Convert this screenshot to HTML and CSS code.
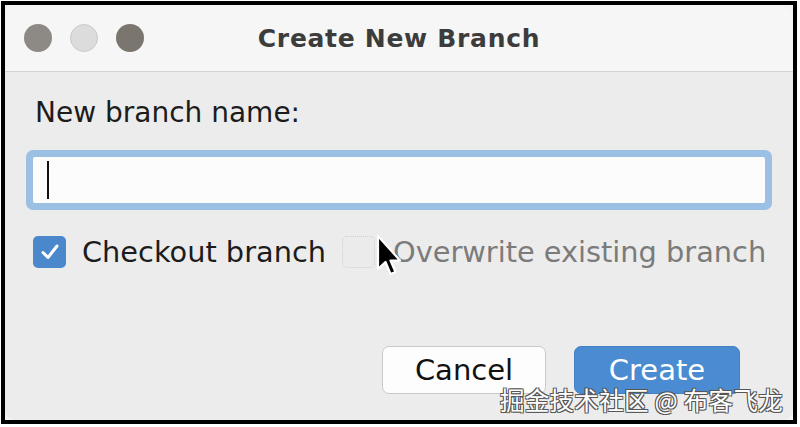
FILE: index.html
```html
<!DOCTYPE html>
<html lang="en">
    <head>
        <meta charset="UTF-8">
        <meta name="viewport" content="width=device-width, initial-scale=1.0">
        <title>Create New Branch</title>
        <link rel="stylesheet" href="styles.css">
    </head>
    <body>
        <div class="frame">
            <div class="window">
                <div class="titlebar">
                    <div class="lights">
                        <span class="light close"></span>
                        <span class="light min"></span>
                        <span class="light zoom"></span>
                    </div>
                    <div class="title">Create New Branch</div>
                    <div></div>
                </div>

                <div class="content">
                    <div class="field-label">New branch name:</div>

                    <div class="field">
                        <div class="field-inner">
                            <span class="caret"></span>
                        </div>
                    </div>

                    <div class="options">
                        <span class="checkbox checked">
                            <svg width="20" height="18" viewBox="0 0 20 18">
                                <path d="M3 9.5 L8 14.5 L17 3" fill="none" stroke="#fff" stroke-width="3" stroke-linecap="round" stroke-linejoin="round"/>
                            </svg>
                        </span>
                        <span class="option-text">Checkout branch</span>
                        <span class="checkbox disabled"></span>
                        <span class="option-text muted">Overwrite existing branch</span>
                    </div>

                    <div class="buttons">
                        <button class="btn cancel-btn">Cancel</button>
                        <button class="btn create-btn">Create</button>
                    </div>
                </div>

                <!-- mouse pointer over the second checkbox -->
                <svg class="pointer" width="26" height="44" viewBox="0 0 26 44">
                    <path d="M2 2 L2 35 L9.5 28 L14.5 40 L19.5 38 L14.5 26.5 L24 26.5 Z" fill="#000" stroke="#fff" stroke-width="2.2" stroke-linejoin="round"/>
                </svg>
            </div>

            <div class="watermark">掘金技术社区 @ 布客飞龙</div>
        </div>
    </body>
</html>
```

FILE: styles.css
```css
body {
    margin: 0;
    background-color: #ffffff;
    font-family: 'DejaVu Sans', 'Noto Sans CJK SC', sans-serif;
}

.frame {
    position: relative;
    width: 788px;
    height: 415px;
    margin: 1px;
    border: 4px solid #000;
    background-color: #f4f4f4;
}

.window {
    position: relative;
    height: 100%;
    background-color: #ececec;
    border-radius: 14px 14px 10px 10px;
    overflow: hidden;
}

.titlebar {
    display: grid;
    grid-template-columns: 1fr auto 1fr;
    align-items: center;
    height: 66px;
    padding: 0 19px;
    background-color: #f6f6f6;
    border-bottom: 1px solid #d2d2d2;
}

.lights {
    display: flex;
    gap: 18px;
}

.light {
    width: 28px;
    height: 28px;
    border-radius: 50%;
    box-sizing: border-box;
}

.light.close {
    background-color: #8d8984;
}

.light.min {
    background-color: #dcdcdc;
    border: 1px solid #c9c9c9;
}

.light.zoom {
    background-color: #7a766f;
}

.title {
    font-family: 'DejaVu Sans', sans-serif;
    font-weight: bold;
    font-size: 25px;
    color: #3c3c3c;
    letter-spacing: 0.7px;
}

.content {
    padding: 24px 21px 0;
}

.field-label {
    margin-left: 9px;
    font-size: 28px;
    line-height: 34px;
    color: #1c1c1c;
}

.field {
    margin-top: 20px;
    padding: 7px;
    background-color: #9cc0e3;
    border-radius: 7px;
}

.field-inner {
    height: 46px;
    background-color: #fcfcfc;
    border-radius: 2px;
    display: flex;
    align-items: center;
}

.caret {
    width: 2px;
    height: 38px;
    margin-left: 14px;
    background-color: #111;
}

.options {
    display: flex;
    align-items: center;
    margin-top: 26px;
    margin-left: 7px;
    height: 32px;
}

.checkbox {
    width: 33px;
    height: 32px;
    border-radius: 5px;
    box-sizing: border-box;
    display: flex;
    align-items: center;
    justify-content: center;
    flex-shrink: 0;
}

.checkbox.checked {
    background-color: #4a88cb;
}

.checkbox.disabled {
    margin-left: 16px;
    background-color: #ebebeb;
    border: 1px dotted #cfcfcf;
}

.option-text {
    margin-left: 16px;
    font-size: 28.8px;
    color: #1c1c1c;
    white-space: nowrap;
}

.option-text.muted {
    margin-left: 18px;
    color: #7b7b7b;
}

.buttons {
    display: flex;
    justify-content: flex-end;
    gap: 28px;
    margin-top: 78px;
    margin-right: 32px;
}

.btn {
    height: 48px;
    border-radius: 7px;
    font-family: 'DejaVu Sans', sans-serif;
    font-size: 29px;
    padding: 0;
    box-sizing: border-box;
}

.cancel-btn {
    width: 164px;
    background-color: #fdfdfd;
    border: 1px solid #c8c8c8;
    color: #111;
}

.create-btn {
    width: 166px;
    background-color: #4a8bd1;
    border: 1px solid #4580c2;
    color: #fff;
}

.pointer {
    position: absolute;
    left: 371px;
    top: 229px;
}

.watermark {
    position: absolute;
    right: 10px;
    bottom: 3px;
    font-family: 'Noto Sans CJK SC', sans-serif;
    font-size: 24.5px;
    color: #ffffff;
    letter-spacing: 0.3px;
    text-shadow: 1px 1px 0 #555, -1px -1px 0 #555, 1px -1px 0 #555, -1px 1px 0 #555;
}
```
